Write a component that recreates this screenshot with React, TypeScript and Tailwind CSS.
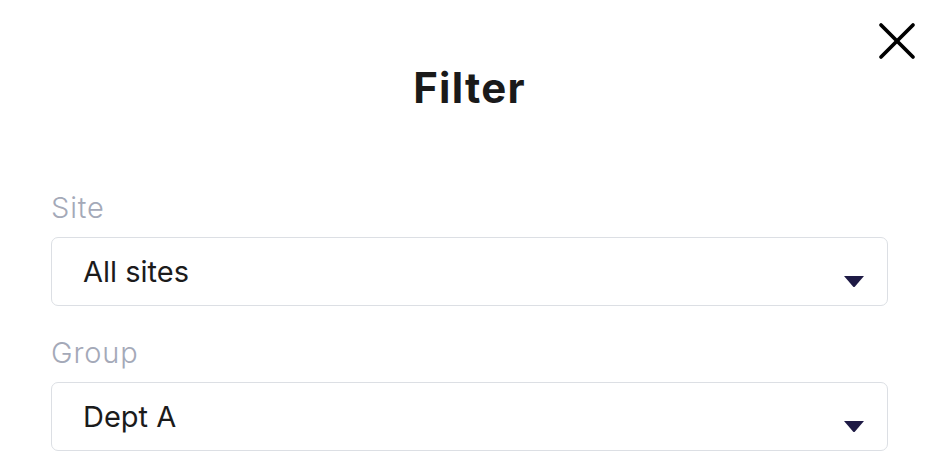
import { X } from "lucide-react";

function Caret() {
    return (
        <svg width="20" height="11" viewBox="0 0 20 11" className="mb-[18px] shrink-0">
            <path d="M0 0 H20 L11 10.5 Q10 11.5 9 10.5 Z" fill="#1e1a45" />
        </svg>
    );
}

function SelectField({ label, value }: { label: string; value: string }) {
    return (
        <div className="flex flex-col">
            <label className="text-[29px] leading-[36px] font-light tracking-[0.03em] text-[#a4a9b8] mb-[11px]">
                {label}
            </label>
            <div className="h-[69px] flex justify-between items-end border-[1.5px] border-[#dcdfe4] rounded-[7px] pl-[31px] pr-[23px] bg-white">
                <span className="self-center text-[29px] leading-[36px] text-[#1b1b1b]">
                    {value}
                </span>
                <Caret />
            </div>
        </div>
    );
}

export default function App() {
    return (
        <div
            className="relative h-[476px] w-[942px] bg-white overflow-hidden"
            style={{ fontFamily: "Inter, 'Noto Sans', sans-serif" }}
        >
            <button className="absolute top-[9px] right-[13px] text-black">
                <X size={64} strokeWidth={1.4} />
            </button>

            <div className="pl-[51px] pr-[54px] pt-[64px]">
                <h2 className="text-center text-[42px] leading-[48px] font-bold tracking-[0.03em] text-[#1a1a1a]">
                    Filter
                </h2>

                <div className="mt-[78px] flex flex-col gap-[29px]">
                    <SelectField label="Site" value="All sites" />
                    <SelectField label="Group" value="Dept A" />
                </div>
            </div>
        </div>
    );
}
